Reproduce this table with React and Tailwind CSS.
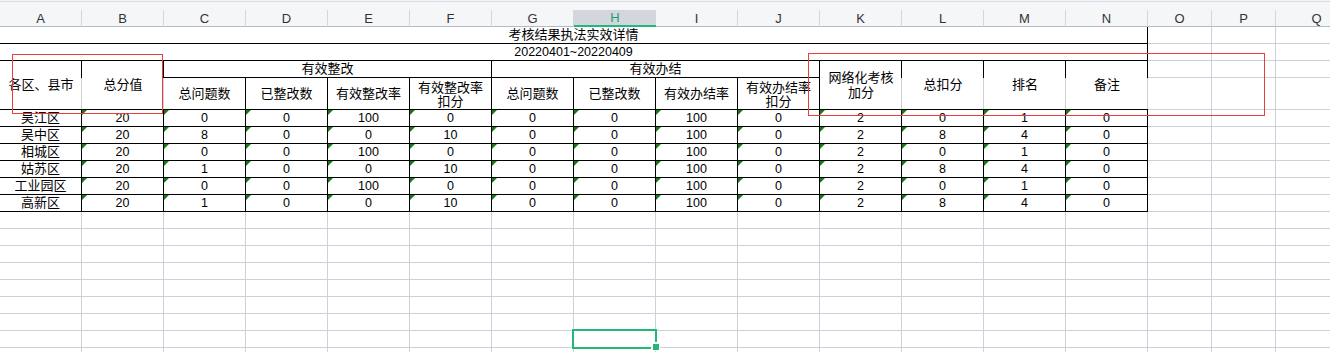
import React from 'react';

const GRAY = 'border-r border-b border-[#cdd1da]';
const BLACK = 'border-r border-b border-black';
const SPLIT =
  'border-b border-b-black bg-[linear-gradient(to_bottom,#000_17px,#cdd1da_17px)] bg-no-repeat bg-right bg-[length:1px_100%]';

const letters = ['A', 'B', 'C', 'D', 'E', 'F', 'G', 'H', 'I', 'J', 'K', 'L', 'M', 'N', 'O', 'P', 'Q'];

const data = [
  ['吴江区', '20', '0', '0', '100', '0', '0', '0', '100', '0', '2', '0', '1', '0'],
  ['吴中区', '20', '8', '0', '0', '10', '0', '0', '100', '0', '2', '8', '4', '0'],
  ['相城区', '20', '0', '0', '100', '0', '0', '0', '100', '0', '2', '0', '1', '0'],
  ['姑苏区', '20', '1', '0', '0', '10', '0', '0', '100', '0', '2', '8', '4', '0'],
  ['工业园区', '20', '0', '0', '100', '0', '0', '0', '100', '0', '2', '0', '1', '0'],
  ['高新区', '20', '1', '0', '0', '10', '0', '0', '100', '0', '2', '8', '4', '0'],
];

function Cell({ className = '', tri = false, children }) {
  return (
    <div className={`relative flex items-center justify-center text-center leading-[14px] ${className}`}>
      {tri && (
        <span className="absolute left-0 top-0 h-0 w-0 border-t-[5px] border-r-[5px] border-t-[#137c13] border-r-transparent" />
      )}
      {children}
    </div>
  );
}

function Blank() {
  return <div className={GRAY} />;
}

function Tail() {
  return (
    <>
      <Blank />
      <Blank />
      <Blank />
    </>
  );
}

export default function App() {
  const emptyRows = Array.from({ length: 9 });
  return (
    <div className="relative h-[352px] w-[1330px] overflow-hidden bg-white font-['Liberation_Sans','Noto_Sans_CJK_SC',sans-serif] text-black">
      {/* top strip */}
      <div className="h-px bg-[#f3f4f6]" />
      <div className="h-px bg-[#d9dce2]" />
      <div className="h-[8px] bg-[#f5f6f8]" />

      {/* column header */}
      <div className="grid h-[17px] grid-cols-[repeat(14,82px)_64px_64px_82px] bg-[#f5f6f8]">
        {letters.map((l) =>
          l === 'H' ? (
            <div
              key={l}
              className="flex items-center justify-center border-b-2 border-b-[#20b97a] bg-[#d3d6dc] text-[13px] leading-none text-[#1f9e70]"
            >
              {l}
            </div>
          ) : (
            <div
              key={l}
              className="flex items-center justify-center border-r border-b border-r-[#d3d6dc] border-b-[#b3bac9] text-[13px] leading-none text-[#333]"
            >
              {l}
            </div>
          )
        )}
      </div>

      {/* sheet */}
      <div className="grid grid-cols-[repeat(14,82px)_64px_64px_82px] grid-rows-[17px_17px_17px_32px] auto-rows-[17px] text-[13px]">
        {/* row 1 */}
        <Cell className={`col-span-14 ${BLACK}`}>考核结果执法实效详情</Cell>
        <Tail />
        {/* row 2 */}
        <Cell className={`col-span-14 text-[12.5px] ${BLACK}`}>20220401~20220409</Cell>
        <Tail />
        {/* row 3 */}
        <Cell className={`row-span-2 ${SPLIT}`}>各区、县市</Cell>
        <Cell className={`row-span-2 ${SPLIT}`}>总分值</Cell>
        <Cell className={`col-span-4 ${BLACK}`}>有效整改</Cell>
        <Cell className={`col-span-4 ${BLACK}`}>有效办结</Cell>
        <Cell className={`row-span-2 leading-[15px] ${SPLIT}`}>
          网络化考核
          <br />
          加分
        </Cell>
        <Cell className={`row-span-2 ${SPLIT}`}>总扣分</Cell>
        <Cell className={`row-span-2 ${SPLIT}`}>排名</Cell>
        <Cell className={`row-span-2 ${SPLIT}`}>备注</Cell>
        <Tail />
        {/* row 4 */}
        <Cell className={BLACK}>总问题数</Cell>
        <Cell className={BLACK}>已整改数</Cell>
        <Cell className={BLACK}>有效整改率</Cell>
        <Cell className={`pt-[2px] ${BLACK}`}>
          有效整改率
          <br />
          扣分
        </Cell>
        <Cell className={BLACK}>总问题数</Cell>
        <Cell className={BLACK}>已整改数</Cell>
        <Cell className={BLACK}>有效办结率</Cell>
        <Cell className={`pt-[2px] ${BLACK}`}>
          有效办结率
          <br />
          扣分
        </Cell>
        <Tail />

        {/* data rows */}
        {data.map((row, ri) => (
          <React.Fragment key={ri}>
            {row.map((v, ci) => (
              <Cell key={ci} tri={ci > 0} className={`${ci > 0 ? 'text-[12.5px]' : ''} ${BLACK}`}>
                {v}
              </Cell>
            ))}
            <Tail />
          </React.Fragment>
        ))}

        {/* empty rows */}
        {emptyRows.map((_, ri) => (
          <React.Fragment key={`e${ri}`}>
            {letters.map((l) => (
              <Blank key={l} />
            ))}
          </React.Fragment>
        ))}
      </div>

      {/* red annotation boxes */}
      <div className="absolute left-[12px] top-[54px] h-[60px] w-[151px] border border-[#ee3b3b]" />
      <div className="absolute left-[808px] top-[53px] h-[63px] w-[457px] border border-[#ee3b3b]" />

      {/* selected cell */}
      <div className="absolute left-[572px] top-[329px] h-[20px] w-[85px] border-2 border-[#20b97a]" />
      <div className="absolute left-[651px] top-[342px] flex h-[9px] w-[9px] items-center justify-center bg-white">
        <div className="h-[6px] w-[6px] bg-[#20b97a]" />
      </div>
    </div>
  );
}
